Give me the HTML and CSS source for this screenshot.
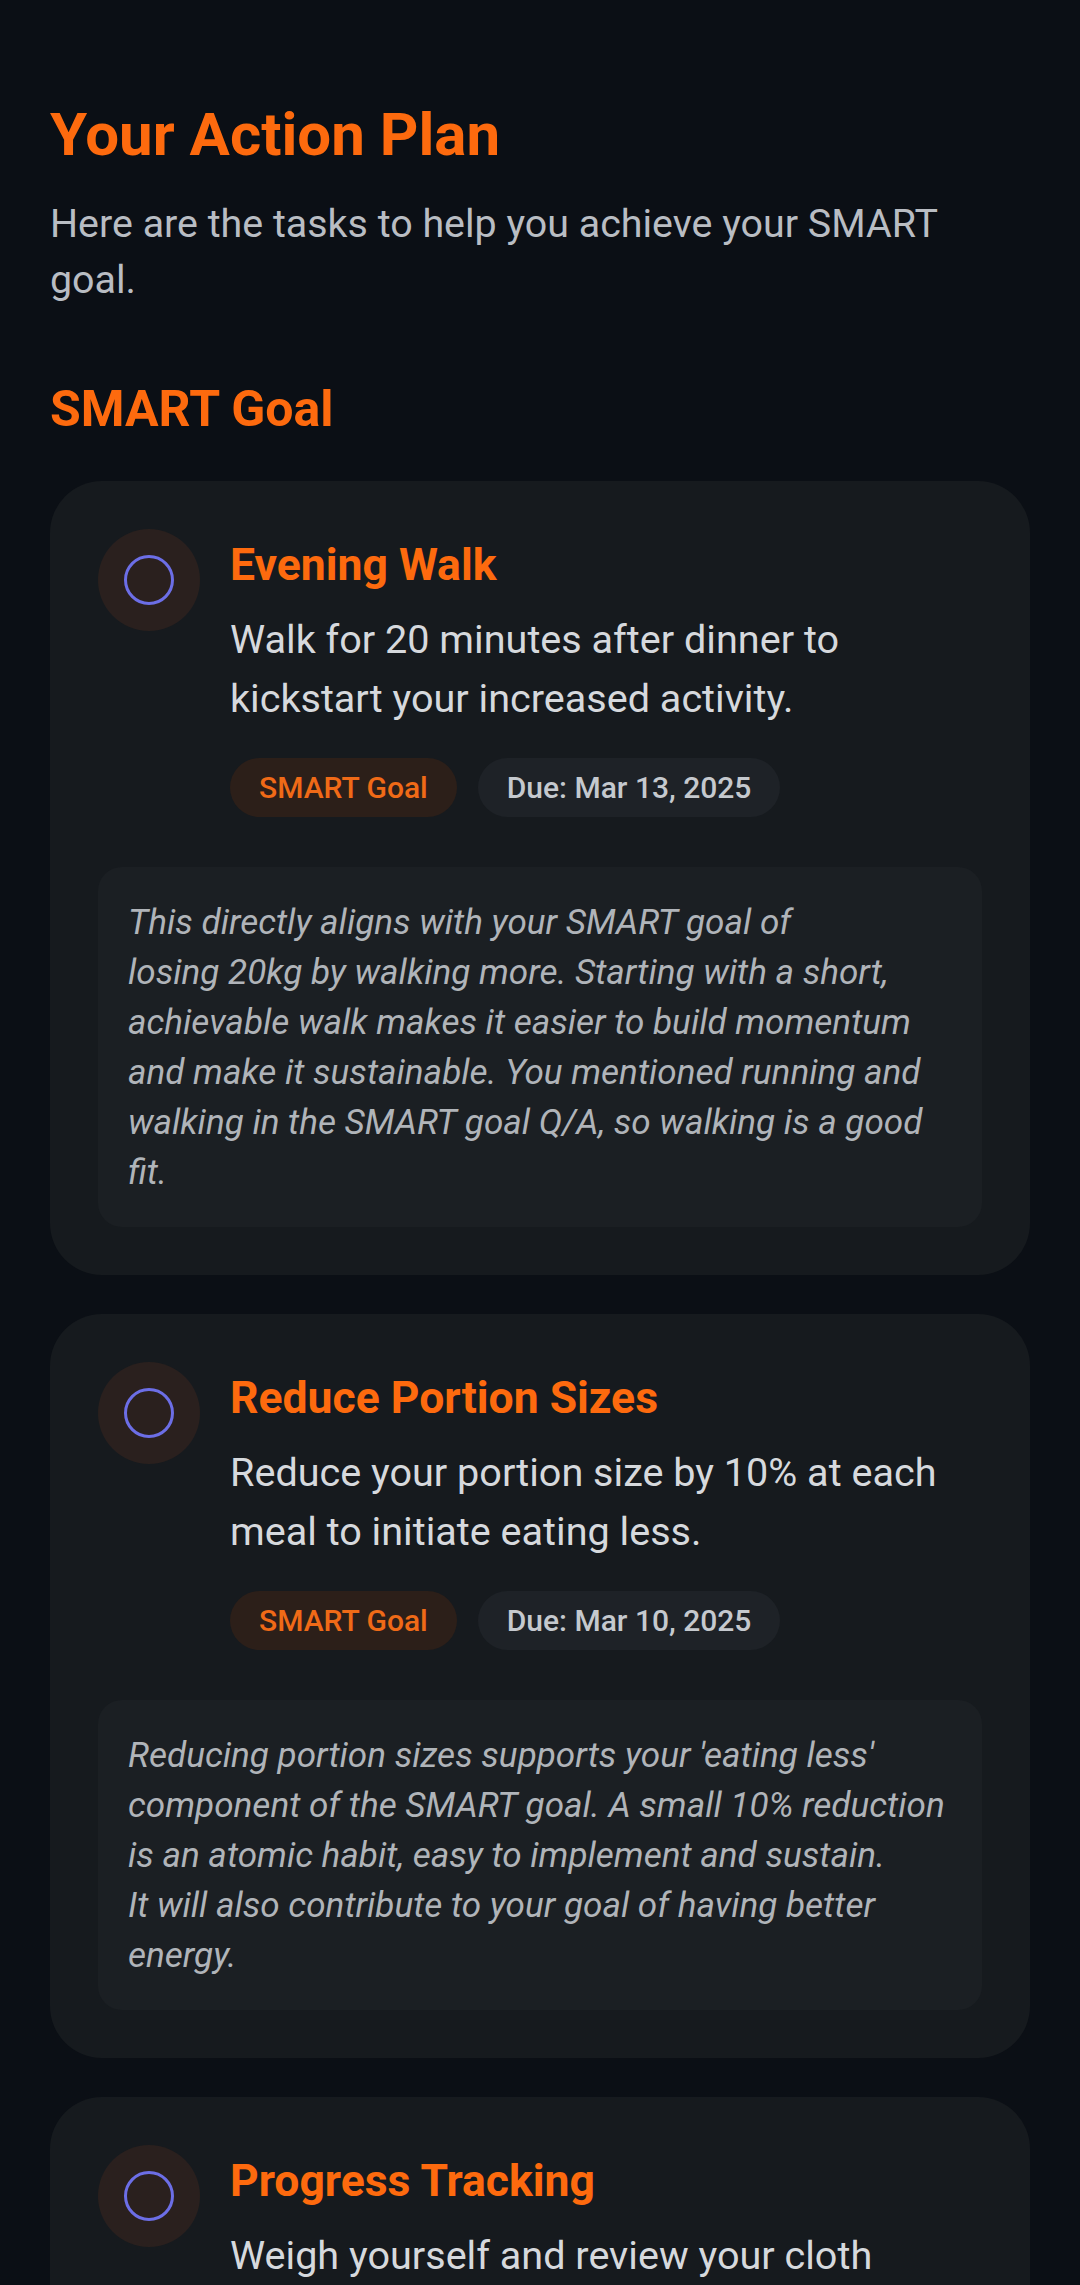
FILE: index.html
```html
<!DOCTYPE html>
<html lang="en">
<head>
    <meta charset="UTF-8">
    <meta name="viewport" content="width=device-width, initial-scale=1.0">
    <title>Your Action Plan</title>
    <link rel="stylesheet" href="styles.css">
</head>
<body>

<div class="page">
    <h1 class="page-title">Your Action Plan</h1>
    <p class="page-sub">Here are the tasks to help you achieve your SMART goal.</p>

    <h2 class="section-title">SMART Goal</h2>

    <!-- Task 1 -->
    <div class="task-card">
        <div class="task-row">
            <div class="check-bubble"><span class="check-ring"></span></div>
            <div class="task-body">
                <h3 class="task-title">Evening Walk</h3>
                <p class="task-desc">Walk for 20 minutes after dinner to kickstart your increased activity.</p>
                <div class="tag-row">
                    <span class="tag tag-goal">SMART Goal</span>
                    <span class="tag tag-due">Due: Mar 13, 2025</span>
                </div>
            </div>
        </div>
        <div class="reason">This directly aligns with your SMART goal of<br>losing 20kg by walking more. Starting with a short, achievable walk makes it easier to build momentum and make it sustainable. You mentioned running and walking in the SMART goal Q/A, so walking is a good fit.</div>
    </div>

    <!-- Task 2 -->
    <div class="task-card">
        <div class="task-row">
            <div class="check-bubble"><span class="check-ring"></span></div>
            <div class="task-body">
                <h3 class="task-title">Reduce Portion Sizes</h3>
                <p class="task-desc">Reduce your portion size by 10% at each meal to initiate eating less.</p>
                <div class="tag-row">
                    <span class="tag tag-goal">SMART Goal</span>
                    <span class="tag tag-due">Due: Mar 10, 2025</span>
                </div>
            </div>
        </div>
        <div class="reason">Reducing portion sizes supports your 'eating less' component of the SMART goal. A small 10% reduction is an atomic habit, easy to implement and sustain.<br>It will also contribute to your goal of having better energy.</div>
    </div>

    <!-- Task 3 -->
    <div class="task-card">
        <div class="task-row">
            <div class="check-bubble"><span class="check-ring"></span></div>
            <div class="task-body">
                <h3 class="task-title">Progress Tracking</h3>
                <p class="task-desc">Weigh yourself and review your cloth measurements weekly to track your progress.</p>
                <div class="tag-row">
                    <span class="tag tag-goal">SMART Goal</span>
                    <span class="tag tag-due">Due: Mar 16, 2025</span>
                </div>
            </div>
        </div>
        <div class="reason">Tracking your weight and how your clothes fit keeps the 20kg goal measurable and shows you the progress you are making.</div>
    </div>
</div>

</body>
</html>
```

FILE: styles.css
```css
body {
    margin: 0;
    padding: 0;
    background-color: #0b0f15;
    font-family: Roboto, "Noto Sans", Arial, sans-serif;
}

.page {
    padding: 101px 50px 60px;
}

.page-title {
    margin: 0;
    font-size: 60px;
    line-height: 68px;
    font-weight: 700;
    color: #fd6a0e;
}

.page-sub {
    margin: 27px 0 0;
    font-size: 39.4px;
    line-height: 56px;
    color: #b9bdc3;
}

.section-title {
    margin: 71px 0 0;
    font-size: 50px;
    line-height: 60px;
    font-weight: 700;
    color: #fd6a0e;
}

.task-card {
    margin-top: 42px;
    padding: 48px;
    background-color: #161a1e;
    border-radius: 52px;
}

.task-card + .task-card {
    margin-top: 39px;
}

.task-row {
    display: flex;
    gap: 30px;
}

.check-bubble {
    flex: 0 0 102px;
    width: 102px;
    height: 102px;
    border-radius: 50%;
    background-color: #2a201e;
    display: flex;
    align-items: center;
    justify-content: center;
}

.check-ring {
    width: 44px;
    height: 44px;
    border: 3.5px solid #6c6ee6;
    border-radius: 50%;
}

.task-body {
    flex: 1;
    min-width: 0;
}

.task-title {
    margin: 0;
    font-size: 44.5px;
    line-height: 72px;
    font-weight: 700;
    color: #fd6a0e;
}

.task-desc {
    margin: 9px 0 0;
    font-size: 39.6px;
    line-height: 59px;
    color: #d6d9dd;
}

.tag-row {
    display: flex;
    gap: 21px;
    margin-top: 30px;
}

.tag {
    padding: 9px 29px;
    font-size: 30px;
    line-height: 41px;
    font-weight: 500;
    border-radius: 30px;
}

.tag-goal {
    background-color: #2c1f19;
    color: #f06a17;
}

.tag-due {
    background-color: #1e2227;
    color: #c5c9ce;
}

.reason {
    margin-top: 50px;
    padding: 30px;
    background-color: #1b1f23;
    border-radius: 24px;
    font-size: 35.1px;
    line-height: 50px;
    font-style: italic;
    color: #b0b4b9;
}
```
